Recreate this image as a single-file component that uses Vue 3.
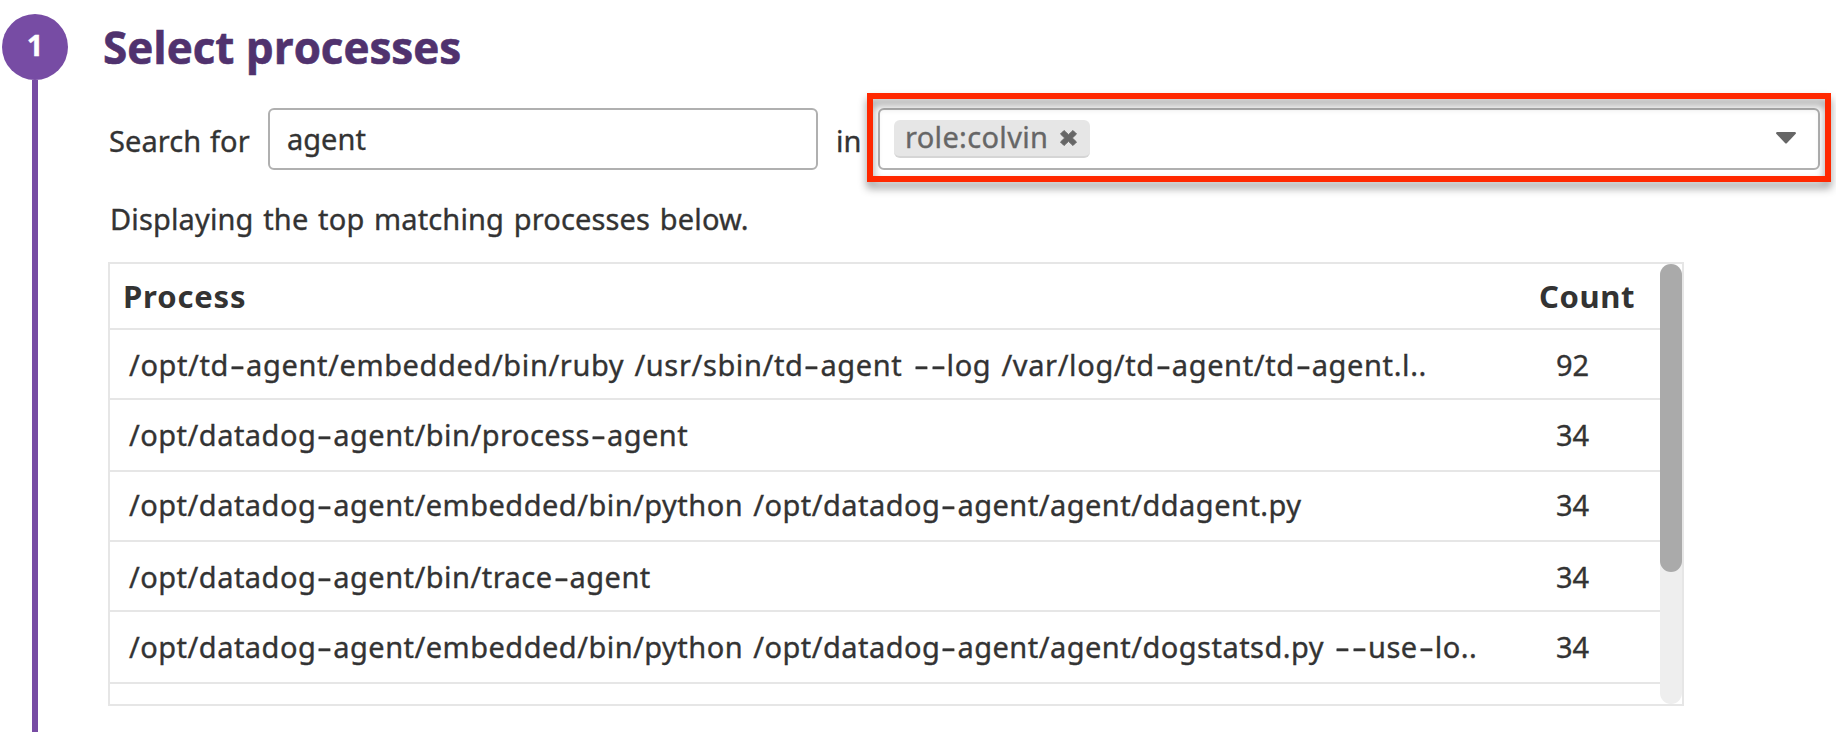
<script setup>
const rows = [
  { name: '/opt/td-agent/embedded/bin/ruby /usr/sbin/td-agent --log /var/log/td-agent/td-agent.l..', count: 92, size: 'loose' },
  { name: '/opt/datadog-agent/bin/process-agent', count: 34, size: 'tall' },
  { name: '/opt/datadog-agent/embedded/bin/python /opt/datadog-agent/agent/ddagent.py', count: 34, size: 'raised' },
  { name: '/opt/datadog-agent/bin/trace-agent', count: 34, size: '' },
  { name: '/opt/datadog-agent/embedded/bin/python /opt/datadog-agent/agent/dogstatsd.py --use-lo..', count: 34, size: 'tall' },
]
// Hyphens get their own span so they can be drawn wider.
const parts = (text) => text.split(/(-)/).filter(Boolean)
</script>

<template>
  <main class="step">
    <aside class="rail">
      <div class="badge">1</div>
      <div class="line"></div>
    </aside>
    <section class="content">
      <h1>Select processes</h1>
      <div class="search">
        <span class="label">Search for</span>
        <div class="input">agent</div>
        <span class="label in">in</span>
        <div class="frame">
          <div class="select">
            <div class="tag">
              <span>role:colvin</span>
              <svg class="close" width="17" height="16" viewBox="0 0 17 16"><path d="M4 0.5 8.5 4.7 13 0.5 16.5 4 12.3 8 16.5 12 13 15.5 8.5 11.3 4 15.5 0.5 12 4.7 8 0.5 4Z" fill="#666" stroke="#666" stroke-width="1" stroke-linejoin="round" /></svg>
            </div>
            <svg class="caret" width="20" height="12" viewBox="0 0 20 12"><path d="M1 0H19Q20 0 20 1.5L11 11Q10 12 9 11L0 1.5Q0 0 1 0Z" fill="#666" /></svg>
          </div>
        </div>
      </div>
      <p class="hint">Displaying the top matching processes below.</p>
      <div class="table">
        <div class="rows">
          <div class="row head"><span>Process</span><span class="hc">Count</span></div>
          <div v-for="(r, i) in rows" :key="i" class="row" :class="r.size">
            <span class="name"><span v-for="(p, j) in parts(r.name)" :key="j" :class="{ dash: p === '-' }">{{ p }}</span></span>
            <span class="count">{{ r.count }}</span>
          </div>
        </div>
        <div class="track"><div class="thumb"></div></div>
      </div>
    </section>
  </main>
</template>

<style>
body { margin: 0; background: #fff; overflow: hidden; }
</style>
<style scoped>
* { box-sizing: border-box; }
.step { display: flex; width: 1836px; height: 732px; overflow: hidden; font-family: "Noto Sans", sans-serif; font-size: 29px; line-height: 40px; color: #333; white-space: nowrap; -webkit-text-stroke: .35px currentColor; }
.rail { width: 108px; flex: none; padding: 14px 0 0 2px; display: flex; flex-direction: column; }
.badge { width: 66px; height: 66px; border-radius: 33px; background: #774ca4; color: #fff; font: bold 29px/62px "Noto Sans", sans-serif; text-align: center; }
.line { width: 6px; flex: 1; margin-left: 30px; background: #774ca4; }
.content { flex: none; width: 1728px; }
h1 { margin: 0 0 0 -5px; height: 93px; padding-top: 17px; font: bold 44px/60px "Open Sans", sans-serif; color: #50326e; -webkit-text-stroke: .6px currentColor; }
.search { display: flex; height: 89px; }
.label { width: 160px; padding: 28px 0 0 1px; letter-spacing: .1px; word-spacing: 1px; }
.input { width: 550px; height: 62px; margin-top: 15px; border: 2px solid #b0b0b0; border-radius: 6px; padding: 9px 0 0 17px; }
.label.in { width: 49px; padding-left: 18px; }
.frame { position: relative; width: 964px; height: 89px; padding: 15px 11px; }
.frame::after { content: ""; position: absolute; inset: 0; border: 6px solid #ff2800; filter: drop-shadow(0 6px 4px rgba(0,0,0,.42)); }
.select { width: 942px; height: 62px; border: 2px solid #b0b0b0; border-radius: 6px; display: flex; justify-content: space-between; padding: 10px 22px 0 14px; }
.tag { display: flex; justify-content: space-between; width: 196px; height: 38px; border-radius: 6px; background: #e6e6e6; border-bottom: 2px solid #d5d5d5; padding: 0 13px 0 11px; line-height: 34px; letter-spacing: .33px; color: #666; }
.close { flex: none; margin-top: 10px; }
.caret { margin-top: 12px; }
.hint { margin: 0; height: 80px; padding: 17px 0 0 2px; letter-spacing: .14px; word-spacing: 2px; }
.table { width: 1576px; height: 444px; border: 2px solid #e6e6e6; display: flex; overflow: hidden; }
.rows { width: 1550px; flex: none; }
.row { height: 70px; border-bottom: 2px solid #e6e6e6; padding: 15px 0 0 19px; display: flex; justify-content: space-between; }
.row.tall { height: 72px; }
.row.raised { padding-top: 13px; }
.name { letter-spacing: .48px; word-spacing: 2px; }
.loose .name { letter-spacing: .62px; }
.dash { display: inline-block; width: 17px; letter-spacing: 0; text-align: center; transform: scaleX(1.6); }
.row.head { height: 66px; font-weight: bold; font-size: 31px; letter-spacing: .85px; padding: 12px 0 0 13px; -webkit-text-stroke: 0; }
.hc { width: 121px; letter-spacing: .6px; }
.count { width: 104px; }
.track { width: 22px; height: 440px; border-radius: 11px; background: #eee; }
.thumb { height: 308px; border-radius: 11px; background: #aaa; }
</style>
